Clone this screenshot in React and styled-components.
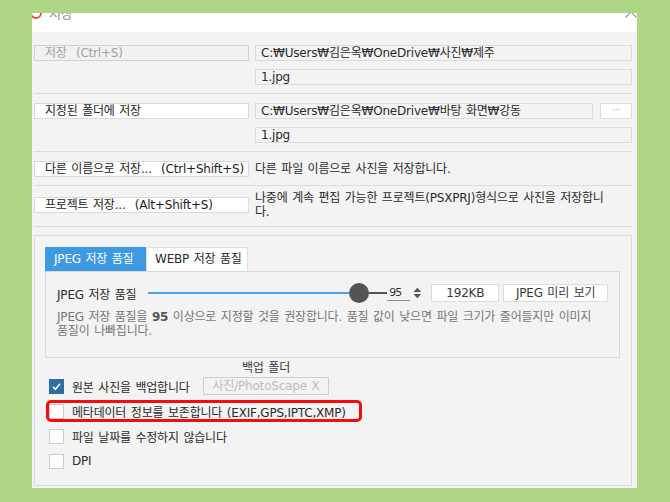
import React from "react";
import styled, { createGlobalStyle } from "styled-components";

const uiFont = `"DejaVu Sans", "Noto Sans CJK KR", sans-serif`;

const GlobalStyle = createGlobalStyle`
  html, body {
    margin: 0;
    padding: 0;
    background: #add585;
  }
`;

const Page = styled.div`
  width: 670px;
  height: 502px;
  box-sizing: border-box;
  padding: 13px 0 0 32px;
  background: #add585;
  overflow: hidden;
`;

const Dialog = styled.div`
  width: 605px;
  height: 475px;
  background: #fff;
  display: flex;
  flex-direction: column;
  font-family: ${uiFont};
  font-size: 12px;
  letter-spacing: -0.2px;
  word-spacing: 1px;
  color: #1c1c1c;
`;

const TitleBar = styled.div`
  height: 19px;
  flex: none;
  display: flex;
  align-items: flex-start;
  overflow: hidden;
`;

const TitleIcon = styled.svg`
  margin: -7px 0 0 -3px;
  flex: none;
`;

const TitleText = styled.span`
  margin: -6px 0 0 6px;
  font-size: 13px;
  line-height: 13px;
  color: #8a8a8a;
`;

const CloseIcon = styled.svg`
  margin: -7px 0 0 auto;
  flex: none;
`;

const Body = styled.div`
  flex: 1;
  display: flex;
  flex-direction: column;
  background: #f3f3f3;
  padding: 0 5px 2px 2px;
  min-height: 0;
`;

const Section = styled.div`
  display: grid;
  grid-template-columns: 215px 1fr;
  column-gap: 6px;
  row-gap: 8px;
  align-items: center;
  padding: ${(p) => p.$pad || "9px 0 8px"};
  border-bottom: 1px solid #dcdcdc;
`;

const ActionButton = styled.div`
  grid-column: 1;
  height: 16px;
  box-sizing: border-box;
  border: 1px solid ${(p) => (p.$disabled ? "#d2d2d2" : "#dadada")};
  background: ${(p) => (p.$disabled ? "#f1f1f1" : "#fff")};
  color: ${(p) => (p.$disabled ? "#a0a0a0" : "#1c1c1c")};
  padding: 0 10px;
  line-height: 14px;
  white-space: pre;
  overflow: hidden;
`;

const Field = styled.div`
  grid-column: 2;
  height: 16px;
  box-sizing: border-box;
  border: 1px solid #dcdcdc;
  background: #f3f3f3;
  padding: 0 5px;
  line-height: 14px;
  color: #2a2a2a;
  white-space: nowrap;
  overflow: hidden;
  flex: ${(p) => (p.$grow ? 1 : "none")};
`;

const FieldRow = styled.div`
  grid-column: 2;
  display: flex;
  gap: 7px;
`;

const DotsButton = styled.div`
  width: 32px;
  height: 16px;
  box-sizing: border-box;
  border: 1px solid #dcdcdc;
  background: #fff;
  color: #b0b0b0;
  text-align: center;
  line-height: 12px;
  font-size: 9px;
`;

const Desc = styled.div`
  grid-column: 2;
  line-height: 14px;
  color: #2a2a2a;
  white-space: nowrap;
`;

const Panel = styled.div`
  flex: 1;
  margin-top: 8px;
  border: 1px solid #dcdcdc;
  padding: 11px 11px 0 10px;
  display: flex;
  flex-direction: column;
`;

const Tabs = styled.div`
  display: flex;
`;

const Tab = styled.div`
  height: 24px;
  box-sizing: border-box;
  width: ${(p) => p.$w}px;
  padding-left: 8px;
  line-height: 23px;
  white-space: nowrap;
  background: ${(p) => (p.$active ? "#3d9ae0" : "#fff")};
  color: ${(p) => (p.$active ? "#fff" : "#2a2a2a")};
  border: 1px solid ${(p) => (p.$active ? "#3d9ae0" : "#dedede")};
  border-bottom: none;
`;

const TabBox = styled.div`
  height: 87px;
  box-sizing: border-box;
  border: 1px solid #dadada;
  padding: 0 11px;
  display: flex;
  flex-direction: column;
`;

const SliderRow = styled.div`
  margin-top: 10px;
  height: 22px;
  display: flex;
  align-items: center;
`;

const SliderLabel = styled.span`
  width: 83px;
  margin-right: 8px;
  color: #2a2a2a;
  white-space: nowrap;
`;

const Slider = styled.div`
  width: 240px;
  display: flex;
  align-items: center;
`;

const Track = styled.div`
  height: 2px;
  background: ${(p) => p.$color};
  flex: ${(p) => (p.$fill ? 1 : "none")};
  width: ${(p) => (p.$fill ? "auto" : "18px")};
`;

const Thumb = styled.div`
  width: 20px;
  height: 20px;
  border-radius: 50%;
  background: #545454;
  flex: none;
`;

const ValueBox = styled.div`
  display: flex;
  align-items: center;
  width: 34px;
  margin-right: 10px;
`;

const ValueText = styled.span`
  width: 21px;
  padding-left: 2px;
  line-height: 14px;
  border-bottom: 1px solid #8a8a8a;
  letter-spacing: -1px;
  font-size: 11px;
  color: #333;
`;

const Spinner = styled.svg`
  margin-left: 3px;
`;

const InfoBox = styled.div`
  width: ${(p) => p.$w}px;
  height: 18px;
  box-sizing: border-box;
  border: 1px solid #dcdcdc;
  background: #fff;
  text-align: center;
  line-height: 16px;
  color: #3a3a3a;
  margin-left: ${(p) => p.$ml || 0}px;
  white-space: nowrap;
`;

const Hint = styled.div`
  margin-top: 6px;
  line-height: 14px;
  color: #767676;
  white-space: nowrap;

  b {
    font-weight: bold;
    color: #555;
  }
`;

const Options = styled.div`
  display: flex;
  flex-direction: column;
  padding-left: 4px;
`;

const BackupRow = styled.div`
  display: flex;
  align-items: flex-end;
  margin-top: 3px;
`;

const Option = styled.div`
  display: flex;
  align-items: center;
  gap: 8px;
  height: ${(p) => p.$h || 16}px;
  width: ${(p) => (p.$w ? `${p.$w}px` : "auto")};
  margin-top: ${(p) => p.$mt || 0}px;
  align-self: ${(p) => (p.$end ? "flex-end" : "flex-start")};
  color: #2a2a2a;
  white-space: nowrap;
  border-radius: 2px;
  outline: ${(p) => (p.$marked ? "3px solid #f40d0d" : "none")};
`;

const Box = styled.div`
  width: 15px;
  height: 15px;
  box-sizing: border-box;
  flex: none;
  border: 1px solid ${(p) => (p.$checked ? "#2f6da6" : "#cacaca")};
  background: ${(p) => (p.$checked ? "#2f6da6" : "#fff")};
  display: flex;
  align-items: center;
  justify-content: center;
`;

const BackupCol = styled.div`
  display: flex;
  flex-direction: column;
  align-items: center;
  gap: 2px;
  margin-left: 8px;
`;

const BackupLabel = styled.span`
  line-height: 14px;
  color: #3a3a3a;
`;

const BackupField = styled.div`
  width: 126px;
  height: 18px;
  box-sizing: border-box;
  border: 1px solid #cfcfcf;
  background: #f3f3f3;
  color: #bdbdbd;
  text-align: center;
  line-height: 16px;
  white-space: nowrap;
`;

const Check = ({ checked }) => (
  <Box $checked={checked}>
    {checked && (
      <svg width="11" height="11" viewBox="0 0 11 11">
        <path d="M2 5.8 L4.4 8.2 L9 2.8" fill="none" stroke="#fff" strokeWidth="1.6" />
      </svg>
    )}
  </Box>
);

const App = () => {
  return (
    <Page>
      <GlobalStyle />
      <Dialog>
        <TitleBar>
          <TitleIcon width="14" height="14" viewBox="0 0 14 14">
            <circle cx="7" cy="7" r="5" fill="none" stroke="#e4573d" strokeWidth="2" />
          </TitleIcon>
          <TitleText>저장</TitleText>
          <CloseIcon width="12" height="12" viewBox="0 0 12 12">
            <path d="M0.5 0.5 L11.5 11.5 M11.5 0.5 L0.5 11.5" stroke="#9a9a9a" strokeWidth="1.2" />
          </CloseIcon>
        </TitleBar>
        <Body>
          <Section $pad="13px 0 8px">
            <ActionButton $disabled>{"저장  (Ctrl+S)"}</ActionButton>
            <Field>C:₩Users₩김은옥₩OneDrive₩사진₩제주</Field>
            <Field>1.jpg</Field>
          </Section>
          <Section>
            <ActionButton>지정된 폴더에 저장</ActionButton>
            <FieldRow>
              <Field $grow>C:₩Users₩김은옥₩OneDrive₩바탕 화면₩강동</Field>
              <DotsButton>···</DotsButton>
            </FieldRow>
            <Field>1.jpg</Field>
          </Section>
          <Section>
            <ActionButton>{"다른 이름으로 저장...  (Ctrl+Shift+S)"}</ActionButton>
            <Desc>다른 파일 이름으로 사진을 저장합니다.</Desc>
          </Section>
          <Section $pad="5px 0 7px">
            <ActionButton>{"프로젝트 저장...  (Alt+Shift+S)"}</ActionButton>
            <Desc>
              나중에 계속 편집 가능한 프로젝트(PSXPRJ)형식으로 사진을 저장합니
              <br />
              다.
            </Desc>
          </Section>
          <Panel>
            <Tabs>
              <Tab $active $w={101}>JPEG 저장 품질</Tab>
              <Tab $w={102}>WEBP 저장 품질</Tab>
            </Tabs>
            <TabBox>
              <SliderRow>
                <SliderLabel>JPEG 저장 품질</SliderLabel>
                <Slider>
                  <Track $fill $color="#4aa3e6" />
                  <Thumb />
                  <Track $color="#555" />
                </Slider>
                <ValueBox>
                  <ValueText>95</ValueText>
                  <Spinner width="9" height="12" viewBox="0 0 9 12">
                    <path d="M4.5 0.5 L8.5 5 L0.5 5 Z M0.5 7 L8.5 7 L4.5 11.5 Z" fill="#555" />
                  </Spinner>
                </ValueBox>
                <InfoBox $w={68}>192KB</InfoBox>
                <InfoBox $w={105} $ml={4}>JPEG 미리 보기</InfoBox>
              </SliderRow>
              <Hint>
                JPEG 저장 품질을 <b>95</b> 이상으로 지정할 것을 권장합니다. 품질 값이 낮으면 파일 크기가 줄어들지만 이미지
                <br />
                품질이 나빠집니다.
              </Hint>
            </TabBox>
            <Options>
              <BackupRow>
                <Option $h={18} $w={146} $end>
                  <Check checked />
                  원본 사진을 백업합니다
                </Option>
                <BackupCol>
                  <BackupLabel>백업 폴더</BackupLabel>
                  <BackupField>사진/PhotoScape X</BackupField>
                </BackupCol>
              </BackupRow>
              <Option $mt={8} $w={310} $marked>
                <Check />
                메타데이터 정보를 보존합니다 (EXIF,GPS,IPTC,XMP)
              </Option>
              <Option $mt={9}>
                <Check />
                파일 날짜를 수정하지 않습니다
              </Option>
              <Option $mt={9}>
                <Check />
                DPI
              </Option>
            </Options>
          </Panel>
        </Body>
      </Dialog>
    </Page>
  );
};

export default App;
